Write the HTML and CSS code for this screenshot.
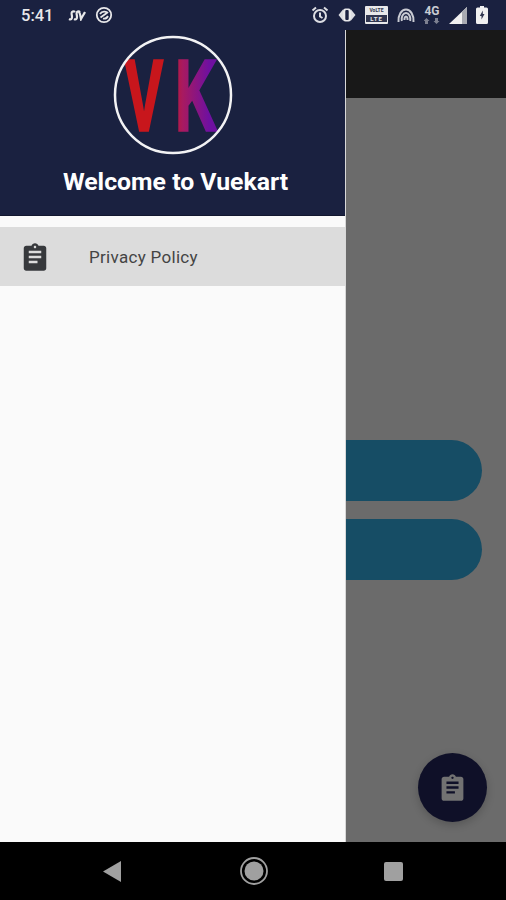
FILE: index.html
```html
<!DOCTYPE html>
<html lang="en">
<head>
  <meta charset="UTF-8" />
  <meta name="viewport" content="width=device-width, initial-scale=1.0"/>
  <title>Vuekart</title>
  <link rel="stylesheet" href="styles.css">
</head>
<body>
  <div class="status-bar">
    <div class="status-left">
      <span class="time">5:41</span>
      <svg class="ic-ssr" viewBox="0 0 18 12" fill="none" stroke="#e8e8ea" stroke-width="2.200">
        <path d="M1 10c2 1 3 0 3-2S3 4 4 3s2-1 3 0M6 10c2 1 3 0 3-2S8 4 9 3s2-1 3 0M11 3c1 1 1.500 4 2 7 1-2 3-5 4-7"/>
      </svg>
      <svg class="ic-dnd" viewBox="0 0 18 18" fill="none" stroke="#e8e8ea">
        <circle cx="9" cy="9" r="7.200" stroke-width="1.800"/>
        <path d="M5 8c2-3 6-3 8-1M5.500 11.500l7-5M8 12.500c2 .5 4-.5 5-2.500" stroke-width="1.800"/>
      </svg>
    </div>
    <div class="status-right">
      <svg class="ic-alarm" viewBox="0 0 18 18" fill="none" stroke="#dcdde2" stroke-width="2">
        <circle cx="9" cy="10" r="6"/>
        <path d="M9 6.500V10.500L11.500 12M1.500 4.500L5 1.500M16.500 4.500L13 1.500"/>
      </svg>
      <svg class="ic-vibrate" viewBox="0 0 18 14">
        <path d="M5 1.500L0.500 7 5 12.500zM13 1.500L17.500 7 13 12.500z" fill="#dcdde2"/>
        <rect x="5" y="0.500" width="8" height="13" rx="2.500" fill="#e8e8ea"/>
        <rect x="7.300" y="2" width="3.400" height="10" rx="1" fill="#1a2140"/>
      </svg>
      <div class="volte">
        <span class="volte-top">VoLTE</span>
        <span class="volte-bot">LTE</span>
      </div>
      <svg class="ic-hotspot" viewBox="0 0 18 15" fill="none" stroke="#c9cbd3" stroke-width="2">
        <path d="M1.500 14C1 7 4.500 1.500 9 1.500S17 7 16.500 14M4.800 13C4 9 6 5 9 5s5 4 4.200 8M7.500 12C7.300 10 8 8.500 9 8.500s1.700 1.500 1.500 3.500"/>
      </svg>
      <div class="net">
        <span>4G</span>
        <svg viewBox="0 0 16 6" fill="#7d8090"><path d="M1 6h3V3h1.500L2.500 0l-3 3H1zM11 0h3v3h1.500l-3 3-3-3H11z"/></svg>
      </div>
      <svg class="ic-signal" viewBox="0 0 18 17">
        <path d="M0 17L18 0v17z" fill="#f0f0f0"/>
        <path d="M13 4.700L18 0v17h-5z" fill="#a8aab2"/>
      </svg>
      <svg class="ic-battery" viewBox="0 0 12 18">
        <path d="M4 0h4v1.500h2.500A1.500 1.500 0 0 1 12 3v13.500a1.500 1.500 0 0 1-1.500 1.500h-9A1.500 1.500 0 0 1 0 16.500V3a1.500 1.500 0 0 1 1.500-1.500H4z" fill="#f0f0f0"/>
        <path d="M6.800 4.500L3.800 10h1.700v3.500l3-5.500H6.800z" fill="#30354f"/>
      </svg>
    </div>
  </div>

  <div class="screen">
    <div class="appbar"></div>
    <div class="page">
      <div class="pill"></div>
      <div class="pill"></div>
    </div>
    <button class="fab">
      <svg viewBox="0 0 24 24" class="clip-icon"><path d="M19 3h-4.200C14.400 1.800 13.300 1 12 1s-2.400.8-2.800 2H5c-1.100 0-2 .9-2 2v16c0 1.100.9 2 2 2h14c1.100 0 2-.9 2-2V5c0-1.100-.9-2-2-2zm-7 0c.550 0 1 .45 1 1s-.45 1-1 1-1-.45-1-1 .45-1 1-1zm2 14H7v-2h7v2zm3-4H7v-2h10v2zm0-4H7V7h10v2z"/></svg>
    </button>

    <aside class="drawer">
      <div class="drawer-head">
        <svg class="logo" viewBox="0 0 120 120">
          <defs>
            <linearGradient id="vk" x1="0" y1="0" x2="120" y2="0" gradientUnits="userSpaceOnUse">
              <stop offset="0.46" stop-color="#c8161c"/>
              <stop offset="0.58" stop-color="#a81a60"/>
              <stop offset="0.8" stop-color="#6f10a0"/>
              <stop offset="0.9" stop-color="#6f10a0"/>
              <stop offset="0.94" stop-color="#e0602a"/>
            </linearGradient>
            <clipPath id="ring"><circle cx="60" cy="60" r="58"/></clipPath>
          </defs>
          <g clip-path="url(#ring)">
            <text class="logo-text" x="12" y="95" textLength="104" lengthAdjust="spacingAndGlyphs" fill="url(#vk)" stroke="url(#vk)">VK</text>
          </g>
          <circle cx="60" cy="60" r="58" fill="none" stroke="#f2f2f4" stroke-width="2.500"/>
        </svg>
        <h1>Welcome to Vuekart</h1>
      </div>
      <a href="#" class="drawer-item">
        <svg viewBox="0 0 24 24" class="clip-icon"><path d="M19 3h-4.200C14.400 1.800 13.300 1 12 1s-2.400.8-2.800 2H5c-1.100 0-2 .9-2 2v16c0 1.100.9 2 2 2h14c1.100 0 2-.9 2-2V5c0-1.100-.9-2-2-2zm-7 0c.550 0 1 .45 1 1s-.45 1-1 1-1-.45-1-1 .45-1 1-1zm2 14H7v-2h7v2zm3-4H7v-2h10v2zm0-4H7V7h10v2z"/></svg>
        <span>Privacy Policy</span>
      </a>
    </aside>
  </div>

  <div class="nav-bar">
    <svg class="nav-back" viewBox="0 0 18 21"><path d="M18 0v21L0 10.500z"/></svg>
    <svg class="nav-home" viewBox="0 0 28 28">
      <circle cx="14" cy="14" r="13" fill="none" stroke="#a0a0a0" stroke-width="1.800"/>
      <circle cx="14" cy="14" r="9.500" fill="#a0a0a0"/>
    </svg>
    <div class="nav-recent"></div>
  </div>
</body>
</html>
```

FILE: styles.css
```css
:root {
  --navy: #1a2140;
  --scrim: #6b6b6b;
  --pill: #164d65;
}

* {
  margin: 0;
  padding: 0;
  box-sizing: border-box;
}

body {
  width: 506px;
  height: 900px;
  overflow: hidden;
  display: flex;
  flex-direction: column;
  font-family: Roboto, "Liberation Sans", sans-serif;
  background: #000;
}

/* status bar */
.status-bar {
  height: 30px;
  display: flex;
  justify-content: space-between;
  align-items: center;
  padding: 0 18px 0 21px;
  background: var(--navy);
  color: #e8e8ea;
}

.status-left, .status-right {
  display: flex;
  align-items: center;
}

.time {
  font-size: 16.5px;
  font-weight: 500;
  width: 47px;
}

.ic-ssr { width: 18px; height: 12px; margin-right: 10px; }
.ic-dnd { width: 18px; height: 18px; margin-left: -1px; }

.status-right { gap: 9px; }
.ic-alarm { width: 18px; height: 18px; }
.ic-vibrate { width: 18px; height: 14px; }
.ic-hotspot { width: 18px; height: 15px; }
.ic-signal { width: 18px; height: 17px; }
.ic-battery { width: 12px; height: 18px; }

.volte {
  width: 23px;
  height: 18px;
  background: #e8e8ea;
  border-radius: 1px;
  display: flex;
  flex-direction: column;
  align-items: center;
  font-size: 6px;
  line-height: 8px;
  font-weight: 700;
  color: #30354f;
}

.volte-top {
  height: 9px;
  font-size: 5px;
  overflow: hidden;
}

.volte-bot {
  width: 21px;
  height: 7px;
  line-height: 7px;
  text-align: center;
  letter-spacing: 1px;
  background: #30354f;
  color: #e8e8ea;
}

.net {
  width: 16px;
  display: flex;
  flex-direction: column;
  align-items: center;
  gap: 2px;
  font-size: 12px;
  line-height: 10px;
  font-weight: 700;
  color: #c9cbd3;
}

.net svg { width: 16px; height: 6px; }

/* page behind the drawer */
.screen {
  position: relative;
  flex: 1;
  background: var(--scrim);
}

.appbar {
  height: 68px;
  background: #181818;
}

.page {
  padding: 342px 24px 0;
  display: flex;
  flex-direction: column;
  gap: 18px;
}

.pill {
  height: 61px;
  border-radius: 31px;
  background: var(--pill);
}

.fab {
  position: absolute;
  right: 19px;
  bottom: 20px;
  width: 69px;
  height: 69px;
  border: none;
  border-radius: 50%;
  background: #0f1028;
  box-shadow: 0 3px 8px rgba(0, 0, 0, 0.2);
  display: flex;
  align-items: center;
  justify-content: center;
}

.fab .clip-icon {
  width: 29px;
  height: 29px;
  fill: #727272;
}

/* drawer */
.drawer {
  position: absolute;
  top: 0;
  left: 0;
  bottom: 0;
  width: 346px;
  background: #fafafa;
  border-right: 1px solid #d8d8d8;
}

.drawer-head {
  height: 186px;
  padding-top: 5px;
  margin-bottom: 11px;
  background: var(--navy);
  border-bottom: 1px solid #12172f;
  display: flex;
  flex-direction: column;
  align-items: center;
}

.logo {
  width: 120px;
  height: 120px;
  overflow: visible;
}

.logo-text {
  font-family: "Liberation Sans", sans-serif;
  font-size: 100px;
  font-weight: 700;
  stroke-width: 3.5px;
  letter-spacing: 22px;
}

.drawer-head h1 {
  margin: 12px 0 0 6px;
  font-size: 24.8px;
  line-height: 30px;
  font-weight: 700;
  color: #fff;
  white-space: nowrap;
}

.drawer-item {
  height: 59px;
  display: flex;
  align-items: center;
  padding-left: 20px;
  background: #dcdcdc;
  color: #444;
  text-decoration: none;
}

.drawer-item .clip-icon {
  width: 30px;
  height: 30px;
  fill: #37393c;
}

.drawer-item span {
  margin-left: 39px;
  font-size: 17px;
  letter-spacing: 0.3px;
}

/* bottom nav */
.nav-bar {
  height: 58px;
  background: #000;
  display: flex;
  align-items: center;
  padding-left: 103px;
}

.nav-back { width: 18px; height: 21px; fill: #a0a0a0; margin-right: 119px; }
.nav-home { width: 28px; height: 28px; margin-right: 116px; }

.nav-recent {
  width: 19px;
  height: 19px;
  background: #a0a0a0;
  border-radius: 2px;
}
```
